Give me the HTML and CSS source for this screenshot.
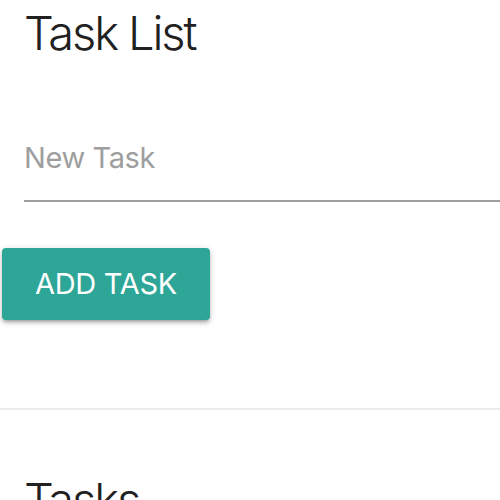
FILE: index.html
```html
<!DOCTYPE html>
<html>
<head>
<meta charset="utf-8">
<title>Task List</title>
<link rel="stylesheet" href="styles.css">
</head>
<body>
<div class="page">
  <section class="top">
    <h1 class="title">Task List</h1>
    <form class="task-form">
      <div class="field">
        <input class="task-input" type="text" placeholder="New Task">
      </div>
      <div class="actions">
        <button class="btn" type="button">Add Task</button>
      </div>
    </form>
  </section>
  <hr class="divider">
  <section class="tasks">
    <h2 class="title">Tasks</h2>
  </section>
</div>
</body>
</html>
```
FILE: styles.css
```css
html, body {
  margin: 0;
  padding: 0;
  background: #ffffff;
  overflow: hidden;
}
body {
  font-family: Inter, "Liberation Sans", sans-serif;
  color: #212121;
}
.page {
  width: 500px;
  height: 500px;
  overflow: hidden;
}
.title {
  margin: 0;
  padding: 4px 0 0 24px;
  font-size: 47px;
  font-weight: 350;
  line-height: 58px;
  letter-spacing: -2.1px;
  color: #212121;
}
.task-form {
  margin-top: 78px;
}
.field {
  padding-left: 24px;
}
.task-input {
  display: block;
  width: 100%;
  box-sizing: border-box;
  margin: 0;
  padding: 0 0 25px 0;
  height: 62px;
  line-height: 35px;
  font-family: Inter, "Liberation Sans", sans-serif;
  font-size: 29px;
  letter-spacing: -0.4px;
  color: #212121;
  border: none;
  border-bottom: 2px solid #9e9e9e;
  outline: none;
  background: transparent;
}
.task-input::placeholder {
  color: #9e9e9e;
}
.actions {
  padding: 46px 0 0 2px;
}
.btn {
  display: inline-block;
  height: 72px;
  padding: 0 33px;
  border: none;
  border-radius: 4px;
  background: #2ea697;
  color: #ffffff;
  font-family: Inter, "Liberation Sans", sans-serif;
  font-size: 29px;
  line-height: 72px;
  text-transform: uppercase;
  letter-spacing: -0.3px;
  box-shadow: 0 3px 3px 0 rgba(0,0,0,0.14), 0 4px 2px -3px rgba(0,0,0,0.12), 0 2px 7px 0 rgba(0,0,0,0.2);
}
.divider {
  margin: 88px 0 0 0;
  border: none;
  border-top: 2px solid #ebebeb;
  height: 0;
}
.tasks {
  padding-top: 57px;
}
```
